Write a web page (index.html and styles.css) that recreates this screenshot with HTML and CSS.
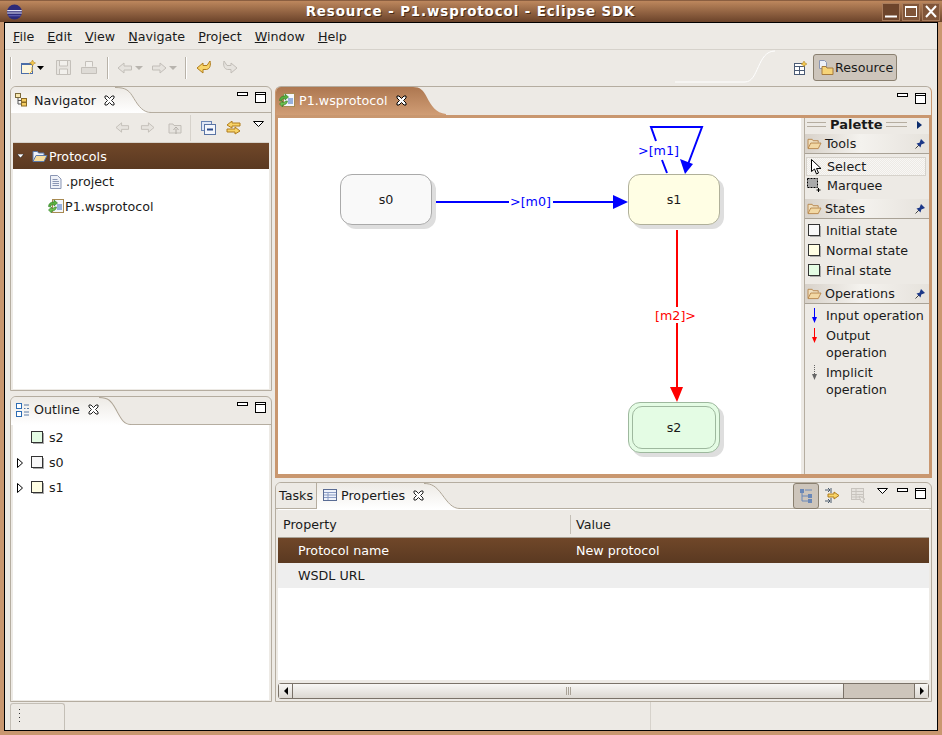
FILE: index.html
```html
<!DOCTYPE html>
<html lang="en">
<head>
    <meta charset="UTF-8">
    <title>Resource - P1.wsprotocol - Eclipse SDK</title>
    <link rel="stylesheet" href="styles.css">
</head>
<body>
    <svg class="defs" width="0" height="0">
        <defs>
            <linearGradient id="orange" x1="0" y1="0" x2="0" y2="1">
                <stop offset="0" stop-color="#ad7750"/>
                <stop offset="1" stop-color="#d09d75"/>
            </linearGradient>
            <linearGradient id="pale" x1="0" y1="0" x2="0" y2="1">
                <stop offset="0" stop-color="#edeae5"/>
                <stop offset="1" stop-color="#ffffff"/>
            </linearGradient>
        </defs>
        <symbol id="close-x" viewBox="0 0 11 11">
            <path d="M1 1h2l2.500 2.500L8 1h2v2L7.500 5.500 10 8v2H8L5.500 7.500 3 10H1V8l2.500-2.500L1 3z" fill="#fff" stroke="#222"/>
        </symbol>
        <symbol id="min" viewBox="0 0 11 11">
            <rect x="0.500" y="0.500" width="10" height="3" fill="#fff" stroke="#000"/>
        </symbol>
        <symbol id="max" viewBox="0 0 11 11">
            <rect x="0.500" y="0.500" width="10" height="10" fill="#fff" stroke="#000"/>
            <path d="M1 2.500h9" stroke="#000"/>
        </symbol>
        <symbol id="menu-tri" viewBox="0 0 11 6">
            <path d="M0.500 0.500h10L5.500 5.500z" fill="#fff" stroke="#000"/>
        </symbol>
        <symbol id="folder" viewBox="0 0 16 14">
            <path d="M1 12V2.500h4.500l1 1.500H12v2" fill="#f0e0c0" stroke="#b8864c"/>
            <path d="M1 12.500l3-6h11l-3 6z" fill="#f2d8a4" stroke="#b8864c"/>
        </symbol>
        <symbol id="folder-blue" viewBox="0 0 16 14">
            <path d="M1 12V2.500h4.500l1 1.500H12v2" fill="#eef2fa" stroke="#5a78a8"/>
            <path d="M1 12.500l3-6h11l-3 6z" fill="#f7dc9c" stroke="#5a78a8"/>
        </symbol>
        <symbol id="file" viewBox="0 0 12 14">
            <path d="M0.500 0.500h7l3.500 3.500v9.500H0.500z" fill="#eef1f8" stroke="#8a96b4"/>
            <path d="M2.500 4.500h5M2.500 6.500h6.500M2.500 8.500h6.500M2.500 10.500h6.500" stroke="#8a96b4"/>
        </symbol>
        <symbol id="wsfile" viewBox="0 0 16 15">
            <rect x="4.500" y="0.500" width="11" height="13" fill="#f4f6fb" stroke="#a88a52"/>
            <path d="M9 6h5M9 8h5M9 10h5" stroke="#3a6cc0"/>
            <path d="M0.500 7.500C1 4 3 3 6 3V1l3.500 3L6 7V5.500C4 5.500 3 6 2.500 8z" fill="#58b040" stroke="#2c7a24" stroke-width="0.600"/>
            <path d="M8.500 8C8 11 6 12 3.500 12v2L0.500 11l3-3v1.500C5 9.500 6 9 6.500 8z" fill="#6cc050" stroke="#2c7a24" stroke-width="0.600"/>
        </symbol>
        <symbol id="box" viewBox="0 0 13 13">
            <rect x="2" y="2" width="11" height="11" fill="#aaa"/>
            <rect x="0.500" y="0.500" width="11" height="11" fill="currentColor" stroke="#333"/>
        </symbol>
        <symbol id="pin" viewBox="0 0 10 10">
            <path d="M0.500 9.500l3.500-3.500" stroke="#444"/>
            <path d="M1.500 4.500l3-.8L6 0l4 4-3.700 1.500L5.500 8.500z" fill="#1c3888"/>
        </symbol>
        <symbol id="back-grey" viewBox="0 0 16 14">
            <path d="M1 7l6-5v3h7.500v4H7v3z" fill="#e6e3de" stroke="#c2beb8"/>
        </symbol>
        <symbol id="fwd-grey" viewBox="0 0 16 14">
            <path d="M15 7L9 2v3H1.500v4H9v3z" fill="#e6e3de" stroke="#c2beb8"/>
        </symbol>
        <symbol id="tri-down-grey" viewBox="0 0 8 4">
            <path d="M0 0h8L4 4z" fill="#b8b4ae"/>
        </symbol>
    </svg>

    <div class="window">
        <div class="titlebar">
            <svg class="logo" width="17" height="16" viewBox="0 0 17 17">
                <circle cx="8.500" cy="8.500" r="8" fill="#2c2a78"/>
                <path d="M0.800 7h15.400M0.700 9.500h15.600" stroke="#e4e4f4" stroke-width="1.200"/>
                <path d="M2 12.500h13" stroke="#6c6cc0" stroke-width="1"/>
            </svg>
            <div class="title">Resource - P1.wsprotocol - Eclipse SDK</div>
            <div class="win-buttons">
                <div class="win-btn"><svg width="16" height="15" viewBox="0 0 16 15"><path d="M2 12.500h12" stroke="#fff" stroke-width="2"/></svg></div>
                <div class="win-btn"><svg width="16" height="15" viewBox="0 0 16 15"><rect x="2.500" y="2.500" width="11" height="10" fill="none" stroke="#fff"/><path d="M2 3h12" stroke="#fff" stroke-width="2"/></svg></div>
                <div class="win-btn"><svg width="16" height="15" viewBox="0 0 16 15"><path d="M3 2l10 11M13 2L3 13" stroke="#fff" stroke-width="2"/></svg></div>
            </div>
        </div>

        <div class="frame">
            <div class="menubar">
                <span class="menu-item"><u>F</u>ile</span>
                <span class="menu-item"><u>E</u>dit</span>
                <span class="menu-item"><u>V</u>iew</span>
                <span class="menu-item"><u>N</u>avigate</span>
                <span class="menu-item"><u>P</u>roject</span>
                <span class="menu-item"><u>W</u>indow</span>
                <span class="menu-item"><u>H</u>elp</span>
            </div>

            <div class="toolbar">
                <div class="grip"></div>
                <svg class="tb-new" width="16" height="15" viewBox="0 0 16 15">
                    <rect x="1.500" y="3.500" width="11" height="10" fill="#fdf6dc" stroke="#4c6ea8"/>
                    <path d="M1 4h12" stroke="#4c6ea8" stroke-width="2"/>
                    <path d="M12.500 0l1 2 2 1-2 1-1 2-1-2-2-1 2-1z" fill="#f4c84c" stroke="#a87c1c" stroke-width="0.500"/>
                    <path d="M12 7v4l-3 3" fill="none" stroke="#e0b040"/>
                </svg>
                <svg class="tb-drop" width="7" height="4" viewBox="0 0 7 4"><path d="M0 0h7L3.500 4z"/></svg>
                <svg class="tb-save" width="15" height="15" viewBox="0 0 15 15">
                    <path d="M0.500 0.500h14v14h-14z" fill="#e8e5e0" stroke="#c4c0ba"/>
                    <path d="M3.500 1v5h8V1M3.500 14V9h8v5" fill="#f2f0ec" stroke="#c4c0ba"/>
                </svg>
                <svg class="tb-print" width="16" height="15" viewBox="0 0 16 15">
                    <path d="M4.500 6.500v-5h7v5" fill="#f2f0ec" stroke="#c4c0ba"/>
                    <path d="M0.500 7.500h15v6h-15z" fill="#dedbd6" stroke="#c4c0ba"/>
                </svg>
                <div class="grip"></div>
                <svg class="tb-arrow" width="16" height="14"><use href="#back-grey"/></svg>
                <svg class="tb-arrow-drop" width="8" height="4"><use href="#tri-down-grey"/></svg>
                <svg class="tb-arrow" width="16" height="14"><use href="#fwd-grey"/></svg>
                <svg class="tb-arrow-drop" width="8" height="4"><use href="#tri-down-grey"/></svg>
                <div class="grip"></div>
                <svg class="tb-edit" width="16" height="15" viewBox="0 0 16 15">
                    <path d="M1 8l6-5v2.500h4L14 1c1 4 0 8-3.500 8.500H7V13z" fill="#f8d468" stroke="#b07c1c"/>
                </svg>
                <svg class="tb-edit-next" width="16" height="15" viewBox="0 0 16 15">
                    <path d="M15 8L9 3v2.500H5L2 1c-1 4 0 8 3.500 8.500H9V13z" fill="#e6e3de" stroke="#c2beb8"/>
                </svg>
                <div class="perspectives">
                    <svg class="persp-curve" width="100" height="33" viewBox="0 0 100 33">
                        <path d="M0 32h70c14 0 12-31 30-31" fill="none" stroke="#fff"/>
                    </svg>
                    <svg class="persp-open" width="14" height="14" viewBox="0 0 14 14">
                        <rect x="0.500" y="2.500" width="10" height="11" fill="#fff" stroke="#4a5a74"/>
                        <path d="M0.500 5.500h10M5.500 5.500v8M0.500 9.500h10" stroke="#4a5a74"/>
                        <path d="M10 0l1 2 2 1-2 1-1 2-1-2-2-1 2-1z" fill="#f4c84c" stroke="#a87c1c" stroke-width="0.500"/>
                    </svg>
                    <div class="persp-btn">
                        <svg width="16" height="16" viewBox="0 0 16 16">
                            <path d="M1.500 0.500h5l2 2v6h-7z" fill="#eef1f8" stroke="#8a96b4"/>
                            <path d="M4 14.500V6.500h4l1 1.500h6v6.500z" fill="#f6d478" stroke="#a67a3c"/>
                        </svg>
                        <span>Resource</span>
                    </div>
                </div>
            </div>

            <div class="workspace">
                <div class="column">
                    <section class="panel panel-navigator">
                        <div class="panel-head">
                            <div class="tab">
                                <svg width="15" height="14" viewBox="0 0 15 14">
                                    <rect x="0.500" y="0.500" width="5" height="4" fill="#f8e8b0" stroke="#7a6a3c"/>
                                    <path d="M3 5v6h3M3 7.500h3" fill="none" stroke="#555"/>
                                    <rect x="6.500" y="5.500" width="5" height="3.500" fill="#f4cc60" stroke="#8a6a24"/>
                                    <rect x="6.500" y="9.500" width="5" height="3.500" fill="#f4cc60" stroke="#8a6a24"/>
                                </svg>
                                <span class="tab-label">Navigator</span>
                                <svg class="tab-close" width="11" height="11"><use href="#close-x"/></svg>
                            </div>
                            <svg class="tab-curve" width="36" height="26" viewBox="0 0 38 26" preserveAspectRatio="none"><path d="M0 0c12 0 15 3 20 11 5 9 10 14 18 14v1H0z" fill="url(#pale)"/><path d="M0 0.500c12 0 15 3 20 11 5 8 10 14 18 14" fill="none" stroke="#aea596"/></svg>
                            <div class="head-fill">
                                <svg class="head-min" width="11" height="11"><use href="#min"/></svg>
                                <svg class="head-max" width="11" height="11"><use href="#max"/></svg>
                            </div>
                        </div>
                        <div class="nav-tools">
                            <svg class="nav-tool" width="15" height="13"><use href="#back-grey"/></svg>
                            <svg class="nav-tool tool-fwd" width="15" height="13"><use href="#fwd-grey"/></svg>
                            <svg class="nav-tool tool-up" width="15" height="14" viewBox="0 0 15 14">
                                <path d="M1 12V3h4l1 1.500h7V12z" fill="#e6e3de" stroke="#c2beb8"/>
                                <path d="M8 13V8M5.500 9L8 6l2.500 3" fill="none" stroke="#b0aca6"/>
                            </svg>
                            <div class="nav-sep"></div>
                            <svg class="nav-tool" width="15" height="14" viewBox="0 0 15 14">
                                <rect x="0.500" y="0.500" width="10" height="9" fill="#dfe6f4" stroke="#6a84b4"/>
                                <rect x="3.500" y="3.500" width="11" height="10" fill="#f4f6fb" stroke="#5a74a4"/>
                                <path d="M6 8.500h6" stroke="#2c4c8c" stroke-width="2"/>
                            </svg>
                            <svg class="nav-tool" width="15" height="14" viewBox="0 0 15 14">
                                <path d="M1 4l5-4v2h8v3H6v2z" fill="#f8d468" stroke="#b07c1c"/>
                                <path d="M14 10L9 6v2H1v3h8v2z" fill="#f8d468" stroke="#b07c1c"/>
                            </svg>
                            <svg class="nav-menu" width="11" height="6"><use href="#menu-tri"/></svg>
                        </div>
                        <div class="tree">
                            <div class="tree-row selected">
                                <svg class="twist" width="7" height="4" viewBox="0 0 7 4"><path d="M0 0h7L3.500 4z" fill="#fff" stroke="#000" stroke-width="0.500"/></svg>
                                <svg class="row-folder" width="16" height="14"><use href="#folder-blue"/></svg>
                                <span>Protocols</span>
                            </div>
                            <div class="tree-row child">
                                <svg class="row-file" width="12" height="14"><use href="#file"/></svg>
                                <span>.project</span>
                            </div>
                            <div class="tree-row child ws">
                                <svg width="16" height="15"><use href="#wsfile"/></svg>
                                <span>P1.wsprotocol</span>
                            </div>
                        </div>
                    </section>

                    <section class="panel panel-outline">
                        <div class="panel-head outline-head">
                            <div class="tab">
                                <svg width="15" height="15" viewBox="0 0 15 15">
                                    <rect x="1.500" y="1.500" width="5" height="5" fill="#fff" stroke="#2c6cb4"/>
                                    <rect x="1.500" y="9.500" width="5" height="5" fill="#fff" stroke="#2c6cb4"/>
                                    <path d="M9 3h5M9 6.500h1.500M12 6.500h2M9 10h5M9 13h5" stroke="#5a7ca8"/>
                                </svg>
                                <span class="tab-label">Outline</span>
                                <svg class="tab-close" width="11" height="11"><use href="#close-x"/></svg>
                            </div>
                            <svg class="tab-curve" width="32" height="28" viewBox="0 0 34 26" preserveAspectRatio="none"><path d="M0 0c10 0 13 3 18 11 5 9 8 14 16 14v1H0z" fill="url(#pale)"/><path d="M0 0.500c10 0 13 3 18 11 5 8 8 14 16 14" fill="none" stroke="#aea596"/></svg>
                            <div class="head-fill">
                                <svg class="head-min" width="11" height="11"><use href="#min"/></svg>
                                <svg class="head-max" width="11" height="11"><use href="#max"/></svg>
                            </div>
                        </div>
                        <div class="tree outline-tree">
                            <div class="tree-row outline-row">
                                <span class="twist-slot"></span>
                                <svg class="state-final" width="13" height="13"><use href="#box"/></svg>
                                <span>s2</span>
                            </div>
                            <div class="tree-row outline-row">
                                <svg class="twist-slot" width="6" height="10" viewBox="0 0 6 10"><path d="M0.500 0.500l5 4.500-5 4.500z" fill="#fff" stroke="#000"/></svg>
                                <svg class="state-initial" width="13" height="13"><use href="#box"/></svg>
                                <span>s0</span>
                            </div>
                            <div class="tree-row outline-row">
                                <svg class="twist-slot" width="6" height="10" viewBox="0 0 6 10"><path d="M0.500 0.500l5 4.500-5 4.500z" fill="#fff" stroke="#000"/></svg>
                                <svg class="state-normal" width="13" height="13"><use href="#box"/></svg>
                                <span>s1</span>
                            </div>
                        </div>
                    </section>
                </div>

                <div class="column">
                    <section class="panel panel-editor">
                        <div class="panel-head editor-head">
                            <div class="tab editor-tab">
                                <svg width="16" height="15"><use href="#wsfile"/></svg>
                                <span class="tab-label">P1.wsprotocol</span>
                                <svg class="tab-close" width="11" height="11" viewBox="0 0 11 11"><path d="M1 1h2l2.500 2.500L8 1h2v2L7.500 5.500 10 8v2H8L5.500 7.500 3 10H1V8l2.500-2.500L1 3z" fill="#fff" stroke="#000"/></svg>
                            </div>
                            <svg class="tab-curve" width="33" height="28" viewBox="0 0 36 28" preserveAspectRatio="none"><path d="M0 0c8 0 11 3 15 10 5 9 10 16 21 17v1H0z" fill="url(#orange)"/></svg>
                            <div class="head-fill">
                                <svg class="head-min" width="11" height="11"><use href="#min"/></svg>
                                <svg class="head-max" width="11" height="11"><use href="#max"/></svg>
                            </div>
                        </div>
                        <div class="editor-body">
                            <div class="canvas">
                                <svg class="edges" width="523" height="357" viewBox="0 0 523 357">
                                    <g stroke="#0000ff" stroke-width="2" fill="none">
                                        <path d="M158 84h73M275 84h60"/>
                                        <path d="M389 55l-5-13M378 23l-5-14h51l-15 40"/>
                                    </g>
                                    <path d="M335 77l15 7-15 7z" fill="#0000ff"/>
                                    <path d="M402 41l13 5-8 10z" fill="#0000ff"/>
                                    <g stroke="#ff0000" stroke-width="2" fill="none">
                                        <path d="M399 112v77M399 205v64"/>
                                    </g>
                                    <path d="M392 269h13l-6 15z" fill="#ff0000"/>
                                    <text class="edge-label" x="232" y="88" fill="#0000ff">&gt;[m0]</text>
                                    <text class="edge-label" x="360" y="37" fill="#0000ff">&gt;[m1]</text>
                                    <text class="edge-label" x="377" y="202" fill="#ff0000">[m2]&gt;</text>
                                </svg>
                                <div class="node node-s0">s0</div>
                                <div class="node node-s1">s1</div>
                                <div class="node node-s2"><div class="node-inner">s2</div></div>
                            </div>
                            <aside class="palette">
                                <div class="palette-title">
                                    <span class="ridge"></span>
                                    <b>Palette</b>
                                    <span class="ridge short"></span>
                                    <svg width="5" height="8" viewBox="0 0 5 8"><path d="M0 0l5 4-5 4z" fill="#0c2c6c"/></svg>
                                </div>
                                <div class="drawer">
                                    <svg width="15" height="13"><use href="#folder"/></svg>
                                    <span>Tools</span>
                                    <svg class="pin" width="10" height="10"><use href="#pin"/></svg>
                                </div>
                                <div class="pal-item active">
                                    <svg width="11" height="16" viewBox="0 0 11 16"><path d="M0.500 0.500v12l3-2.500 2 5 2-1-2-4.500h4.500z" fill="#fff" stroke="#000"/></svg>
                                    <span>Select</span>
                                </div>
                                <div class="pal-item marquee">
                                    <svg width="15" height="15" viewBox="0 0 15 15">
                                        <rect x="0.500" y="0.500" width="10" height="9" fill="#aaa" stroke="#000" stroke-dasharray="2 1"/>
                                        <path d="M11.500 10v4M9.500 12h4" stroke="#000"/>
                                    </svg>
                                    <span>Marquee</span>
                                </div>
                                <div class="drawer">
                                    <svg width="15" height="13"><use href="#folder"/></svg>
                                    <span>States</span>
                                    <svg class="pin" width="10" height="10"><use href="#pin"/></svg>
                                </div>
                                <div class="pal-item state-item">
                                    <svg class="state-initial" width="13" height="13"><use href="#box"/></svg>
                                    <span>Initial state</span>
                                </div>
                                <div class="pal-item state-item">
                                    <svg class="state-normal" width="13" height="13"><use href="#box"/></svg>
                                    <span>Normal state</span>
                                </div>
                                <div class="pal-item state-item">
                                    <svg class="state-final" width="13" height="13"><use href="#box"/></svg>
                                    <span>Final state</span>
                                </div>
                                <div class="drawer">
                                    <svg width="15" height="13"><use href="#folder"/></svg>
                                    <span>Operations</span>
                                    <svg class="pin" width="10" height="10"><use href="#pin"/></svg>
                                </div>
                                <div class="pal-item op-item">
                                    <svg width="7" height="15" viewBox="0 0 7 15"><path d="M3.500 0v10" stroke="#0000ff"/><path d="M1 9h5l-2.500 6z" fill="#0000ff"/></svg>
                                    <span>Input operation</span>
                                </div>
                                <div class="pal-item op-item">
                                    <svg width="7" height="15" viewBox="0 0 7 15"><path d="M3.500 0v10" stroke="#ff0000"/><path d="M1 9h5l-2.500 6z" fill="#ff0000"/></svg>
                                    <span>Output<br>operation</span>
                                </div>
                                <div class="pal-item op-item">
                                    <svg width="7" height="15" viewBox="0 0 7 15"><path d="M3.500 0v10" stroke="#666" stroke-dasharray="1 1"/><path d="M1 9h5l-2.500 6z" fill="#666"/></svg>
                                    <span>Implicit<br>operation</span>
                                </div>
                            </aside>
                        </div>
                    </section>

                    <section class="panel panel-props">
                        <div class="panel-head props-head">
                            <div class="tab tab-tasks"><span class="tab-label">Tasks</span></div>
                            <div class="tab tab-props">
                                <svg width="14" height="12" viewBox="0 0 14 12">
                                    <rect x="0.500" y="0.500" width="13" height="11" fill="#eef2fa" stroke="#5a6c94"/>
                                    <path d="M1 3.500h12M1 6h12M1 8.500h12M5 3v8" stroke="#8a9cc4"/>
                                </svg>
                                <span class="tab-label">Properties</span>
                                <svg class="tab-close" width="11" height="11"><use href="#close-x"/></svg>
                            </div>
                            <svg class="tab-curve" width="36" height="26" viewBox="0 0 36 26"><path d="M0 0c8 0 12 3 18 11 6 9 10 14 18 14v1H0z" fill="url(#pale)"/><path d="M0 0.500c8 0 12 3 18 11 6 8 10 14 18 14" fill="none" stroke="#aea596"/></svg>
                            <div class="head-fill">
                                <div class="props-toggle">
                                    <svg width="14" height="16" viewBox="0 0 14 16">
                                        <path d="M3 3v10h7M3 8h7M6 2h7" fill="none" stroke="#6a88b8"/>
                                        <rect x="1" y="1" width="4" height="4" fill="#6a88b8"/>
                                        <rect x="9" y="6" width="4" height="4" fill="#6a88b8"/>
                                        <rect x="9" y="11" width="4" height="4" fill="#6a88b8"/>
                                    </svg>
                                </div>
                                <svg class="props-tool" width="15" height="15" viewBox="0 0 15 15">
                                    <path d="M0 2h5M3 0l2 2-2 2M0 13h5M3 11l2 2-2 2" fill="none" stroke="#4a5a6c"/>
                                    <path d="M6 0v5M6 10v5" stroke="#4a5a6c"/>
                                    <path d="M3 6h6V4l5 3.500L9 11V9H3z" fill="#f8d468" stroke="#b07c1c"/>
                                </svg>
                                <svg class="props-tool faded" width="15" height="15" viewBox="0 0 15 15">
                                    <rect x="0.500" y="0.500" width="12" height="11" fill="#e6e3de" stroke="#c8c4be"/>
                                    <path d="M1 3.500h11M1 6.500h11M1 9h11M5 1v10" stroke="#c8c4be"/>
                                    <path d="M8 8l6 3-2 1 1 3-3-2z" fill="#edeae5" stroke="#c8c4be"/>
                                </svg>
                                <svg class="props-menu" width="11" height="6"><use href="#menu-tri"/></svg>
                                <svg class="props-min" width="11" height="11"><use href="#min"/></svg>
                                <svg class="props-max" width="11" height="11"><use href="#max"/></svg>
                            </div>
                        </div>
                        <div class="props-body">
                            <div class="table-head">
                                <div class="col-name"><span>Property</span></div>
                                <div class="col-value">Value</div>
                            </div>
                            <div class="table-row selected">
                                <div class="col-name indent">Protocol name</div>
                                <div class="col-value">New protocol</div>
                            </div>
                            <div class="table-row striped">
                                <div class="col-name indent">WSDL URL</div>
                                <div class="col-value"></div>
                            </div>
                            <div class="table-rest"></div>
                            <div class="scrollbar">
                                <div class="scroll-btn"><svg width="4" height="8" viewBox="0 0 4 8"><path d="M4 0L0 4l4 4z"/></svg></div>
                                <div class="scroll-thumb"><i></i><i></i><i></i></div>
                                <div class="scroll-trough"></div>
                                <div class="scroll-btn"><svg width="4" height="8" viewBox="0 0 4 8"><path d="M0 0l4 4-4 4z"/></svg></div>
                            </div>
                        </div>
                    </section>
                </div>
            </div>

            <div class="statusbar">
                <div class="status-tab"><div class="status-dots"></div></div>
                <div class="status-sep"></div>
            </div>
        </div>
    </div>
</body>
</html>
```
FILE: styles.css
```css
* {
    box-sizing: border-box;
}

html, body {
    margin: 0;
    width: 942px;
    height: 735px;
    overflow: hidden;
}

body {
    font-family: "DejaVu Sans", sans-serif;
    font-size: 12.7px;
    color: #1a1a1a;
    background: #c9976f;
}

svg {
    display: block;
    flex: none;
}

.defs {
    position: absolute;
}

.window {
    width: 942px;
    height: 735px;
    display: flex;
    flex-direction: column;
    padding: 0 4px 4px;
    background: #c9976f;
}

/* title bar */
.titlebar {
    height: 22px;
    margin: 0 -4px;
    padding: 0 3px 0 5px;
    display: flex;
    align-items: center;
    background: linear-gradient(#bd875d, #6b432a);
    border-top: 1px solid #8a5e40;
}

.logo {
    margin-left: 1px;
}

.title {
    flex: 1;
    text-align: center;
    color: #fff;
    font-weight: bold;
    font-size: 13.4px;
    letter-spacing: 0.9px;
    text-shadow: 1px 1px 0 #4a2c18;
    padding-left: 35px;
    white-space: nowrap;
}

.win-buttons {
    display: flex;
    gap: 4px;
}

.win-btn {
    width: 16px;
    height: 16px;
    background: #6d452c;
    outline: 1px solid #a87c5c;
}

.win-btn:nth-child(2), .win-btn:nth-child(3) {
    background: #805539;
}

.frame {
    flex: 1;
    display: flex;
    flex-direction: column;
    border: 1px solid #000;
    background: #edeae5;
    min-height: 0;
}

/* menu */
.menubar {
    height: 27px;
    display: flex;
    align-items: center;
    gap: 13.1px;
    padding-left: 8px;
    border-bottom: 1px solid #d6d2cb;
}

/* toolbar */
.toolbar {
    height: 35px;
    display: flex;
    align-items: center;
    padding-left: 5px;
}

.grip {
    width: 2px;
    height: 22px;
    background: #fff;
    border-left: 1px solid #b8b2a8;
}

.tb-new { margin-left: 8px; }
.tb-drop { margin-left: 1px; }
.tb-save { margin-left: 12px; }
.tb-print { margin-left: 10px; margin-right: 10px; }
.tb-arrow { margin-left: 8px; }
.tb-arrow-drop { margin-left: 2px; }
.toolbar .tb-arrow-drop + .grip { margin-left: 8px; }
.tb-edit { margin-left: 9px; }
.tb-edit-next { margin-left: 10px; }

.perspectives {
    margin-left: auto;
    align-self: stretch;
    display: flex;
    align-items: center;
    padding-right: 40px;
}

.persp-curve {
    align-self: flex-start;
    margin-right: 19px;
}

.persp-btn {
    margin-left: 5px;
    width: 84px;
    height: 27px;
    display: flex;
    align-items: center;
    gap: 1px;
    padding-left: 4px;
    background: #cdc5bb;
    border: 1px solid #8a8070;
    border-radius: 3px;
}

/* workspace */
.workspace {
    height: 617px;
    padding: 1px 5px 0;
    display: grid;
    grid-template-columns: 262px 657px;
    gap: 3px;
}

.column {
    display: flex;
    flex-direction: column;
    min-height: 0;
}

.panel {
    display: flex;
    flex-direction: column;
    border: 1px solid #b5ada0;
    border-radius: 6px 6px 0 0;
    min-height: 0;
    overflow: hidden;
}

.panel-navigator { height: 305px; margin-bottom: 5px; }
.panel-outline { height: 306px; }
.panel-editor { height: 392px; margin-bottom: 4px; border-color: #b5ada0 #c9976f #c9976f; }
.panel-props { height: 220px; }

.panel-head {
    height: 26px;
    display: flex;
    flex: none;
}

.tab {
    display: flex;
    align-items: center;
    padding-left: 4px;
    background: linear-gradient(#edeae5, #fff);
}

.tab-label {
    margin-left: 4px;
}

.tab-close {
    margin-left: 8px;
}

.tab-curve {
    flex: none;
}

.head-fill {
    flex: 1;
    display: flex;
    align-items: center;
    justify-content: flex-end;
    padding: 0 5px 4px 0;
    border-bottom: 1px solid #b5ada0;
}

.head-min {
    margin-right: 7px;
}

.outline-head {
    height: 28px;
}

.outline-head .tab {
    padding-bottom: 3px;
}

.outline-head .head-fill {
    padding-bottom: 6px;
}

/* left panels */
.nav-tools {
    height: 29px;
    flex: none;
    display: flex;
    align-items: center;
    justify-content: flex-end;
    padding-right: 7px;
}

.nav-tool {
    margin-right: 10px;
}

.nav-tool.tool-fwd {
    margin-right: 13px;
}

.nav-tool.tool-up {
    margin-right: 7px;
}

.nav-sep {
    width: 1px;
    height: 26px;
    margin: 0 10px 0 0;
    background: #d6d2cb;
}

.nav-menu {
    margin-left: 2px;
    margin-bottom: 8px;
}

.tree {
    flex: 1;
    margin: 0 2px 1px;
    background: #fff;
    border-top: 1px solid #d6d2cb;
}

.tree-row {
    height: 25px;
    display: flex;
    align-items: center;
}

.tree-row.selected {
    height: 26px;
    color: #fff;
    background: linear-gradient(#704729, #5a3921);
}

.twist {
    margin-left: 4px;
}

.row-folder {
    margin-left: 8px;
    margin-right: 1px;
}

.tree-row.child {
    padding-left: 37px;
    gap: 4px;
}

.tree-row.ws {
    padding-left: 35px;
    gap: 1px;
}

.outline-tree {
    padding-top: 0;
    border-top: 0;
}

.outline-row {
    padding-left: 4px;
}

.twist-slot {
    width: 6px;
    height: 10px;
    margin-right: 8px;
}

.outline-row span:last-child {
    margin-left: 5px;
}

.state-initial { color: #f8f8f8; }
.state-normal { color: #fffee4; }
.state-final { color: #e4fce4; }

/* editor */
.editor-head {
    height: 28px;
}

.editor-tab {
    color: #fff;
    background: linear-gradient(#ad7750, #d09d75);
    padding: 0 6px 2px 3px;
}

.editor-head .head-fill {
    border-bottom: 0;
    padding-bottom: 6px;
}

.editor-body {
    flex: 1;
    display: flex;
    border: solid #c9976f;
    border-width: 3px 2px;
    min-height: 0;
    background: #edeae5;
}

/* free canvas: the nodes' places are the content */
.canvas {
    position: relative;
    width: 523px;
    background: #fff;
    overflow: hidden;
}

.edges {
    position: absolute;
    left: 0;
    top: 0;
}

.edge-label {
    font-family: "DejaVu Sans", sans-serif;
    font-size: 12.7px;
}

.node {
    position: absolute;
    width: 92px;
    height: 51px;
    display: flex;
    align-items: center;
    justify-content: center;
    border: 1px solid #aaa;
    border-radius: 12px;
    box-shadow: 4px 4px 0 #dedede;
}

.node-s0 { left: 62px; top: 56px; background: #f9f9f9; }
.node-s1 { left: 350px; top: 56px; background: #fffee4; border-color: #b0b09a; }
.node-s2 { left: 350px; top: 284px; background: #e4fce4; border-color: #9eb89e; padding: 3px; }

.node-inner {
    width: 100%;
    height: 100%;
    display: flex;
    align-items: center;
    justify-content: center;
    border: 1px solid #9eb89e;
    border-radius: 10px;
}

/* palette */
.palette {
    margin-left: 3px;
    flex: 1;
    border-left: 1px solid #b5ada0;
    min-width: 0;
}

.palette-title {
    height: 13px;
    display: flex;
    align-items: center;
    gap: 4px;
    padding-left: 2px;
    font-size: 13px;
    margin-bottom: 3px;
}

.ridge {
    width: 19px;
    height: 5px;
    border-top: 1px solid #b5ada0;
    border-bottom: 1px solid #b5ada0;
}

.ridge.short {
    width: 21px;
    margin-right: 6px;
}

.drawer {
    height: 20px;
    display: flex;
    align-items: center;
    gap: 3px;
    padding: 0 4px 0 2px;
    background: linear-gradient(90deg, #d8d2ca, #f4f2ee 45%, #e6e2dc);
    border-bottom: 1px solid #a9a296;
}

.pin {
    margin-left: auto;
}

.pal-item {
    height: 19px;
    display: flex;
    align-items: center;
    gap: 5px;
    padding-left: 2px;
}

.pal-item.active {
    margin: 3px 3px 0 1px;
    padding-left: 4px;
    border: 1px solid #d6d2cb;
    background: repeating-conic-gradient(#f8f7f5 0 25%, #edeae5 0 50%) 0 0 / 2px 2px;
}

.drawer + .pal-item:not(.active) {
    margin-top: 1px;
}

.pal-item + .drawer {
    margin-top: 4px;
}

.state-item {
    height: 20px;
    padding-left: 3px;
    gap: 5px;
}

.op-item {
    height: auto;
    min-height: 19px;
    align-items: flex-start;
    padding: 2px 0 1px 6px;
    gap: 8px;
    line-height: 17px;
}

.op-item svg {
    margin-top: 1px;
}

/* properties */
.props-head {
    height: 26px;
}

.tab-tasks {
    padding-left: 3px;
    padding-right: 2px;
    width: 41px;
    border-right: 1px solid #b5ada0;
    background: #edeae5;
    border-bottom: 1px solid #b5ada0;
}

.tab-tasks .tab-label {
    margin-left: 0;
}

.tab-props {
    padding: 0 0 2px 6px;
}

.tab-props .tab-label {
    margin-left: 4px;
}

.props-head .head-fill {
    padding: 0 5px 0 0;
}

.props-toggle {
    width: 26px;
    height: 26px;
    display: flex;
    align-items: center;
    justify-content: center;
    background: #cdc5bb;
    border: 1px solid #8a8070;
    border-radius: 3px;
    margin-right: 6px;
}

.props-tool {
    margin-right: 11px;
}

.props-menu {
    align-self: flex-start;
    margin: 5px 9px 0 0;
}

.props-min {
    align-self: flex-start;
    margin: 5px 7px 0 0;
}

.props-max {
    align-self: flex-start;
    margin-top: 5px;
}

.props-body {
    flex: 1;
    min-height: 0;
    display: flex;
    flex-direction: column;
    margin: 0 2px 2px;
    border-top: 1px solid #fff;
}

.table-head {
    height: 28px;
    display: flex;
    align-items: center;
    flex: none;
    padding-top: 2px;
    border-bottom: 1px solid #a9a296;
}

.col-name {
    width: 293px;
    padding-left: 5px;
    flex: none;
}

.table-head .col-name {
    border-right: 1px solid #c4bfb6;
    height: 19px;
    line-height: 19px;
}

.col-value {
    padding-left: 5px;
}

.table-row {
    height: 25px;
    display: flex;
    align-items: center;
    flex: none;
}

.table-row.selected {
    color: #fff;
    background: linear-gradient(#704729, #5a3921);
}

.table-row.striped {
    background: #eeeeee;
}

.indent {
    padding-left: 20px;
}

.table-rest {
    flex: 1;
    background: #fff;
}

.scrollbar {
    height: 16px;
    flex: none;
    display: flex;
    margin-top: 3px;
    border: 1px solid #7a7268;
    border-radius: 3px;
    background: #cdc5bb;
}

.scroll-btn {
    width: 13px;
    display: flex;
    align-items: center;
    justify-content: center;
    background: linear-gradient(#f8f7f5, #dcd8d2);
}

.scroll-thumb {
    width: 552px;
    display: flex;
    align-items: center;
    justify-content: center;
    gap: 1px;
    background: linear-gradient(#f8f7f5, #dcd8d2);
    border-left: 1px solid #7a7268;
    border-right: 1px solid #7a7268;
}

.scroll-thumb i {
    width: 1px;
    height: 8px;
    background: #a9a296;
}

.scroll-trough {
    flex: 1;
    border-right: 1px solid #7a7268;
}

/* status bar */
.statusbar {
    flex: 1;
    display: flex;
    padding-left: 5px;
}

.status-tab {
    width: 55px;
    margin-top: 1px;
    padding: 5px 0 0 8px;
    border: 1px solid #c4bfb6;
    border-bottom: 0;
    border-radius: 3px 3px 0 0;
}

.status-dots {
    width: 1px;
    height: 16px;
    background: repeating-linear-gradient(#333 0 1px, transparent 1px 4px);
}

.status-sep {
    width: 1px;
    margin-left: 585px;
    background: #d6d2cb;
}
```
